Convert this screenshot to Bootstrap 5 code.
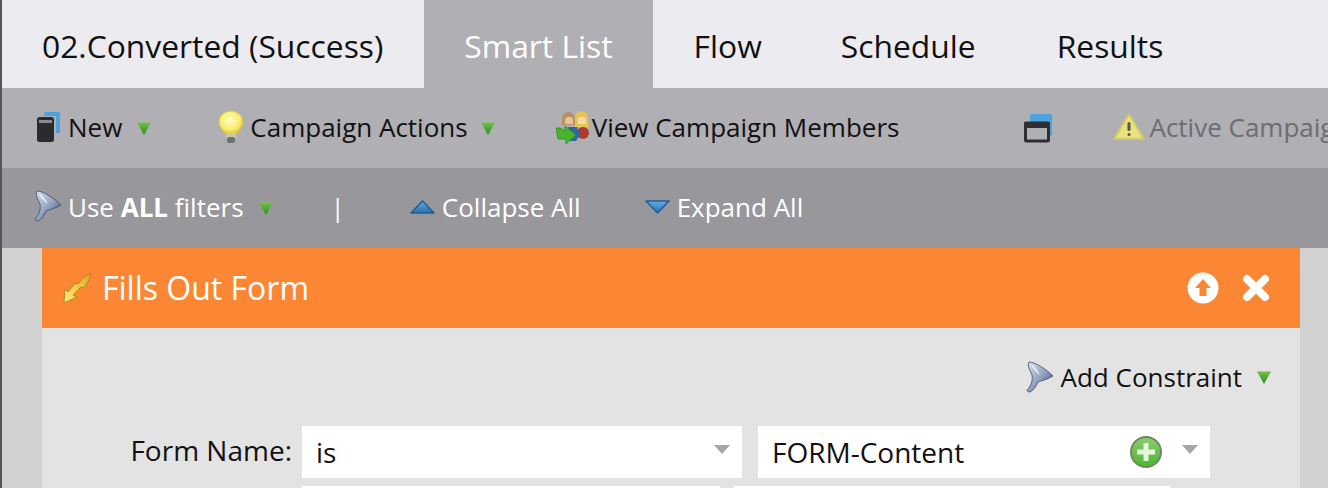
<!DOCTYPE html>
<html lang="en"><head><meta charset="utf-8"><title>Smart List</title>
<link href="https://cdn.jsdelivr.net/npm/bootstrap@5.3.0/dist/css/bootstrap.min.css" rel="stylesheet">
<style>
html,body{height:488px;overflow:hidden}
body{font-family:"Open Sans","Noto Sans",sans-serif;background:#d2d2d2;color:#111;border-left:2px solid #55555a;width:1328px}
.tabbar{height:88px;background:#ececf0;font-size:31.800px;line-height:92px}
.tabitem{padding:0 40px;white-space:nowrap}
.tabitem.on{background:#b0afb4;color:#fff}
.tab-a{padding-right:41px}
.tab-c{padding:0 39px 0 41px}
.tab-d{padding-right:41px}
.tools{height:80px;background:#b0afb4;font-size:26px;white-space:nowrap;overflow:hidden}
.sepline{width:2px;height:80px;background:#a0a0a4}
.filters{height:80px;background:#98979c;color:#fff;font-size:26px;white-space:nowrap}
.tool{display:flex;align-items:center;height:80px;line-height:1;padding-bottom:2px}
.muted-tool{color:#6c6c72}
.pane{margin:0 28px 0 40px;background:#e3e3e3;height:240px;overflow:hidden}
.panehead{height:80px;background:#fb8735;color:#fff;font-size:32px;padding:0 29px 0 20px}
.addrow{height:98px;font-size:26px;padding:0 29px 0 0}
.fieldlabel{width:260px;text-align:right;font-size:28px;padding-right:10px;line-height:48px}
.inp{background:#fff;height:52px;font-size:28px;line-height:52px;padding:0 14px}
.w1{width:440px;padding-right:12px}.w2{width:452px;margin-left:16px;padding-right:12px}
.w3{width:418px}.w4{width:436px;margin-left:14px}
.row2{margin-left:260px;margin-top:8px}
.w-arrow{width:0;height:0;border-left:8px solid transparent;border-right:8px solid transparent;border-top:9px solid #a5a5a5;margin-top:-5px}
svg{flex:none;display:block}
.ml-new{margin-left:34px;margin-right:6px}
.ml-dd{margin-left:15px}
.ml-dd2{margin-left:13px}
.ml-bulb{margin-left:66px}
.gap-icon{margin-left:5px}
.ml-sep{margin-left:30px}
.ml-view{margin-left:31px}
.mr-ppl{margin-right:3px}
.ml-win{margin-left:125px}
.nudge-down{margin-top:4px}
.ml-warn{margin-left:61px}
.ml-fun{margin-left:30px}
.mr-fun{margin-right:6px}
.ml-pipe{margin-left:58px}
.ml-col{margin-left:65px}
.ml-exp{margin-left:64px}
.mr-tri{margin-right:7px}
.ml-arrow{margin-left:20px}
.ml-close{margin-left:22px}
.ml-ft{margin-left:10px}
.ml-add{margin-left:7px}
.nudge-up{margin-top:-2px}
</style></head><body>
<svg width="0" height="0" class="position-absolute"><defs>
<linearGradient id="g" x1="0" y1="0" x2="0" y2="1"><stop offset="0" stop-color="#74c248"/><stop offset="1" stop-color="#2a8a20"/></linearGradient>
<linearGradient id="fun" x1="0" y1="0" x2="1" y2="1"><stop offset="0" stop-color="#dfe5ee"/><stop offset=".55" stop-color="#8d9dbd"/><stop offset="1" stop-color="#2b3d66"/></linearGradient>
<linearGradient id="bolt" x1="1" y1="0" x2="0" y2="1"><stop offset="0" stop-color="#d9a32a"/><stop offset=".6" stop-color="#f5d34e"/><stop offset="1" stop-color="#fde98c"/></linearGradient>
<radialGradient id="bulb" cx=".45" cy=".4" r=".6"><stop offset="0" stop-color="#fffbc4"/><stop offset=".7" stop-color="#f7ed72"/><stop offset="1" stop-color="#e0c433"/></radialGradient>
<linearGradient id="blue" x1="0" y1="0" x2="0" y2="1"><stop offset="0" stop-color="#63ade6"/><stop offset="1" stop-color="#2a6fa8"/></linearGradient>
<linearGradient id="plus" x1="0" y1="0" x2="0" y2="1"><stop offset="0" stop-color="#8ccc70"/><stop offset="1" stop-color="#4fb52f"/></linearGradient>
<symbol id="dd" viewBox="0 0 14 13"><path d="M0 .5h14L7 13z" fill="url(#g)"/></symbol>
<symbol id="funnel" viewBox="0 0 30 32"><path d="M5 1C11 1 22 8 29 15 24 18 17 20 14 21 12 25 10 29 6 31 4 31 3 30 3 29 7 25 9 20 8 14 6 9 3 5 5 1z" fill="url(#fun)" stroke="#37476b" stroke-width=".8"/><path d="M7 3C9 8 12 11 16 14 13 9 11 6 7 3z" fill="#f2f5fa"/></symbol>
</defs></svg>
<div class="tabbar d-flex">
<div class="tabitem tab-a">02.Converted (Success)</div>
<div class="tabitem on">Smart List</div>
<div class="tabitem tab-c">Flow</div>
<div class="tabitem tab-d">Schedule</div>
<div class="tabitem">Results</div>
</div>
<div class="tools d-flex align-items-center">
<div class="tool ml-new"><svg width="26" height="32" viewBox="0 0 26 32"><path d="M8 3a2 2 0 0 1 2-2h12a2 2 0 0 1 2 2v19h-4V5H8z" fill="#4aa3e0"/><rect x="1" y="6" width="17" height="25" rx="2.500" fill="#2b2b2d"/><rect x="3" y="9" width="13" height="3" fill="#8a8a8e"/></svg></div>
<div class="tool">New</div>
<svg class="ml-dd" width="14" height="13"><use href="#dd"/></svg>
<div class="tool ml-bulb"><svg width="28" height="34" viewBox="0 0 28 34"><path d="M14 1C7 1 2 6 2 12c0 5 4 8 6 12h12c2-4 6-7 6-12 0-6-5-11-12-11z" fill="url(#bulb)" stroke="#dcc33a"/><rect x="9" y="23" width="10" height="5" fill="#c9c7b8"/><rect x="10" y="27" width="8" height="6" rx="2" fill="#6f6f72"/></svg><span class="gap-icon">Campaign Actions</span></div>
<svg class="ml-dd2" width="14" height="13"><use href="#dd"/></svg>
<div class="sepline ml-sep"></div>
<div class="tool ml-view"><svg class="mr-ppl" width="33" height="33" viewBox="0 0 33 33"><path d="M6 8c0-9 13-9 13 0l1 6H6z" fill="#b6905f"/><path d="M9 8c2-3 6-3 8 0v5H9z" fill="#e7c49a"/><path d="M19 7c0-9 13-9 13 0l1 9H19z" fill="#e6c552"/><path d="M22 8c2-3 6-3 8 0v5h-8z" fill="#f4dba8"/><circle cx="27" cy="22" r="6" fill="#ad3a2e"/><path d="M12 16h9l3 8-4 6h-8z" fill="#2f68a8"/><path d="M0 17h4l5 3v-5l11 9-10 9v-5H2z" fill="#49b52d" stroke="#2b8a1c" stroke-width=".8"/></svg>View Campaign Members</div>
<div class="tool ml-win"><svg class="nudge-down" width="28" height="30" viewBox="0 0 28 30"><rect x="6" y="0" width="22" height="22" rx="2" fill="#4aa3e0"/><rect x="1.500" y="9" width="23" height="18" rx="1" fill="#b0afb4" stroke="#2f2f33" stroke-width="3"/><rect x="0" y="8" width="26" height="6" fill="#2f2f33"/></svg></div>
<div class="tool muted-tool ml-warn"><svg class="me-1" width="32" height="30" viewBox="0 0 32 30"><path d="M16 2 31 27H1z" fill="#e8e27c" stroke="#cfc96c" stroke-width="2" stroke-linejoin="round"/><rect x="14.500" y="10" width="3" height="9" rx="1.500" fill="#555"/><rect x="14.500" y="21" width="3" height="3" rx="1.500" fill="#555"/></svg>Active Campaign</div>
</div>
<div class="filters d-flex align-items-center">
<div class="tool ml-fun"><svg class="mr-fun nudge-up" width="30" height="32"><use href="#funnel"/></svg><span>Use <b>ALL</b> filters</span></div>
<svg class="ml-dd" width="14" height="13"><use href="#dd"/></svg>
<div class="tool ml-pipe">|</div>
<div class="tool ml-col"><svg class="mr-tri" width="25" height="14" viewBox="0 0 25 14"><path d="M12.500 1 24 13H1z" fill="url(#blue)" stroke="#245d8f" stroke-width="1.500" stroke-linejoin="round"/></svg>Collapse All</div>
<div class="tool ml-exp"><svg class="mr-tri" width="25" height="14" viewBox="0 0 25 14"><path d="M1 1h23L12.500 13z" fill="url(#blue)" stroke="#245d8f" stroke-width="1.500" stroke-linejoin="round"/></svg>Expand All</div>
</div>
<div class="pane">
<div class="panehead d-flex align-items-center">
<svg width="30" height="32" viewBox="0 0 30 32"><path d="M29 1C28 6 26 12 21 16l-2-1-8 8 4 2-13 6 1-14 3 3 7-9 3 1c3-4 8-9 13-11z" fill="url(#bolt)" stroke="#b8861c"/></svg>
<span class="ml-ft flex-grow-1">Fills Out Form</span>
<svg width="32" height="32" viewBox="0 0 32 32"><circle cx="16" cy="16" r="15.500" fill="#fff"/><path d="M16 7 24 16H19.500V24H12.500V16H8z" fill="#fb8735"/></svg>
<svg class="ml-close" width="30" height="30" viewBox="0 0 30 30"><path d="M6 6 24 24M24 6 6 24" stroke="#fff" stroke-width="8" stroke-linecap="round"/></svg>
</div>
<div class="addrow d-flex align-items-center justify-content-end">
<svg width="30" height="32"><use href="#funnel"/></svg>
<span class="ml-add">Add Constraint</span>
<svg class="ml-dd" width="14" height="13"><use href="#dd"/></svg>
</div>
<div class="d-flex">
<div class="fieldlabel">Form Name:</div>
<div class="inp w1 d-flex align-items-center justify-content-between"><span>is</span><div class="w-arrow"></div></div>
<div class="inp w2 d-flex align-items-center"><span class="flex-grow-1">FORM-Content</span><svg width="32" height="32" viewBox="0 0 32 32"><circle cx="16" cy="16" r="15" fill="url(#plus)" stroke="#6a8a62" stroke-width="2"/><path d="M16 7v18M7 16h18" stroke="#e6f6de" stroke-width="5"/></svg><div class="w-arrow ml-arrow"></div></div>
</div>
<div class="d-flex row2">
<div class="inp w3"></div><div class="inp w4"></div>
</div>
</div>
<script src="https://cdn.jsdelivr.net/npm/bootstrap@5.3.0/dist/js/bootstrap.bundle.min.js"></script>
</body></html>
